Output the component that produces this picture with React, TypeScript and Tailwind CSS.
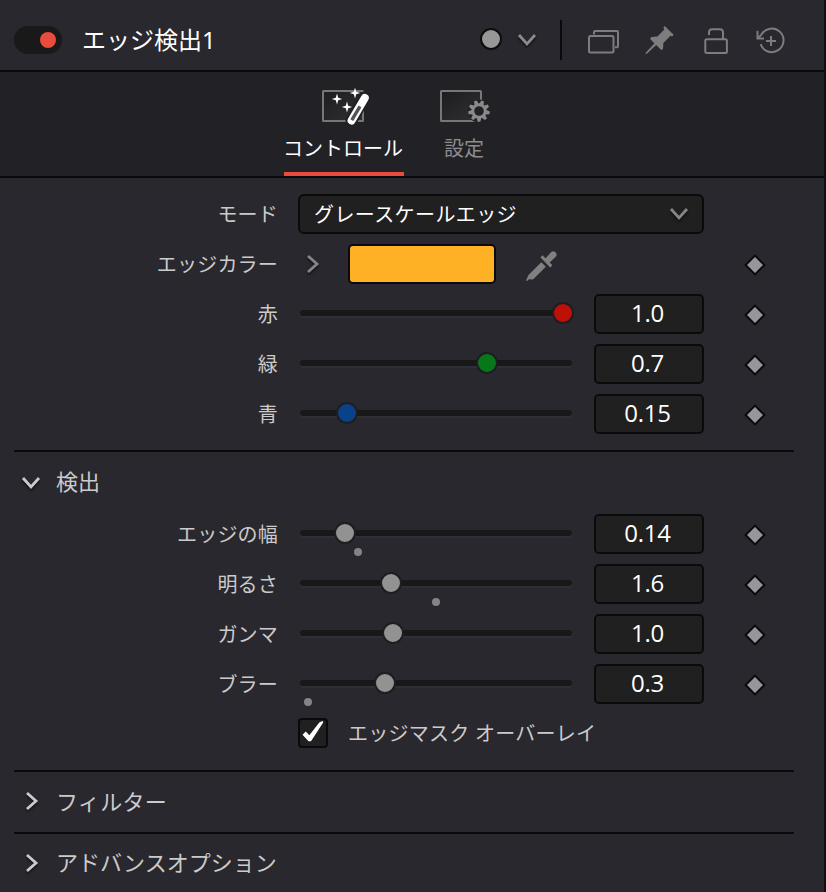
import { useState } from 'react';

type SliderRow = {
  label: string;
  value: string;
  thumb: number;
  mark?: number;
  color?: string;
};

const TRACK = 272;

const colorRows: SliderRow[] = [
  { label: '赤', value: '1.0', thumb: 263, color: 'bg-[#bd1108]' },
  { label: '緑', value: '0.7', thumb: 187, color: 'bg-[#08761b]' },
  { label: '青', value: '0.15', thumb: 47, color: 'bg-[#0a4289]' },
];

const detectRows: SliderRow[] = [
  { label: 'エッジの幅', value: '0.14', thumb: 45, mark: 58 },
  { label: '明るさ', value: '1.6', thumb: 91, mark: 136 },
  { label: 'ガンマ', value: '1.0', thumb: 93 },
  { label: 'ブラー', value: '0.3', thumb: 85, mark: 8 },
];

const Chevron = ({ dir, className }: { dir: 'down' | 'right'; className: string }) => (
  <svg
    width="24"
    height="24"
    viewBox="0 0 24 24"
    fill="none"
    stroke="currentColor"
    strokeWidth="2.8"
    className={`shrink-0 drop-shadow-[0_2px_1px_rgba(0,0,0,0.55)] ${className}`}
  >
    {dir === 'down' ? <path d="M4 7 12 16 20 7" /> : <path d="M8 4 17 12 8 20" />}
  </svg>
);

const Diamond = () => (
  <svg width="22" height="22" viewBox="0 0 22 22" className="mt-0.5 ml-[40px] shrink-0">
    <path d="M11 1.6 20.4 11 11 20.4 1.6 11Z" fill="#97969c" stroke="#0a0a0a" strokeWidth="2" />
  </svg>
);

const Label = ({ children }: { children?: string }) => (
  <div className="w-[278px] shrink-0 pt-0.5 text-right text-xl tracking-[0.2px] text-[#cbcbcb]">{children}</div>
);

const Slider = ({ row }: { row: SliderRow }) => (
  <div className="relative ml-[22px] h-[50px] w-[272px] shrink-0">
    <div className="mt-[21px] h-1.5 rounded-full bg-[#181818] shadow-[0_2px_0_#302f36]" />
    <div
      className={`absolute top-[13px] size-[22px] -translate-x-1/2 rounded-full border-2 border-[#1e1e20] ${row.color ?? 'bg-[#929292]'}`}
      style={{ left: `${(row.thumb / TRACK) * 100}%` }}
    />
    {row.mark !== undefined && (
      <div
        className="absolute top-[39px] size-2 -translate-x-1/2 rounded-full bg-[#848484]"
        style={{ left: `${(row.mark / TRACK) * 100}%` }}
      />
    )}
  </div>
);

const ParamRow = ({ row }: { row: SliderRow }) => (
  <div className="flex h-[50px] items-center">
    <Label>{row.label}</Label>
    <Slider row={row} />
    <div className="ml-[22px] flex h-10 w-[110px] shrink-0 items-center justify-center rounded-[5px] border-2 border-[#0a0a0a] bg-[#202020] pr-[3px] pb-0.5 font-['Open_Sans',sans-serif] text-2xl leading-none tracking-[-0.2px] text-white">
      {row.value}
    </div>
    <Diamond />
  </div>
);

const Divider = () => <div className="mr-[30px] ml-3.5 h-0.5 bg-[#0a0a0c]" />;

const Header = () => {
  const [enabled, setEnabled] = useState(true);

  return (
    <div className="flex h-[72px] shrink-0 items-center border-b-2 border-[#0a0a0c] pt-[10px] pl-3.5">
      <button
        onClick={() => setEnabled(!enabled)}
        className={`flex h-7 w-12 items-center rounded-full bg-[#191919] px-1.5 ${enabled ? 'justify-end' : 'justify-start'}`}
      >
        <span className="size-4 rounded-full bg-[#e94b3c]" />
      </button>
      <div className="ml-5 w-[398px] text-2xl leading-none text-white">エッジ検出1</div>
      <div className="-mt-0.5 size-[22px] rounded-full border-2 border-[#0c0c0c] bg-[#979797]" />
      <Chevron dir="down" className="ml-[13px] text-[#8b8b8b]" />
      <div className="ml-[21px] h-10 w-0.5 bg-[#0a0a0c]" />
      <div className="mt-0.5 ml-[22px] flex items-center gap-6 text-[#7d7d7d]">
        {/* Versions */}
        <svg width="36" height="32" viewBox="584 25 36 32" fill="none" stroke="currentColor" strokeWidth="2">
          <rect x="589" y="36" width="24.5" height="16.5" rx="1.5" />
          <path d="M594 34.5V32Q594 31 595 31H617Q618 31 618 32V46Q618 47.2 617 47.2H615" />
        </svg>
        {/* Pin */}
        <svg width="32" height="32" viewBox="644 25 32 32" fill="currentColor">
          <path d="M664.8 26 673.6 34.8 672.2 36.4 670.5 35.8 663.4 43 663 49 661.2 50 656.2 45 646.6 54 645.4 53 654.4 43.6 650 38.8 651.5 37 657.5 36.4 664.3 29.4 663.4 27.4Z" />
        </svg>
        {/* Lock */}
        <svg width="32" height="32" viewBox="700 25 32 32" fill="none" stroke="currentColor" strokeWidth="2">
          <rect x="705.3" y="39.3" width="21.6" height="13.6" rx="1.5" />
          <path d="M709 35V32.2Q709 29.3 712 29.3H720Q723 29.3 723 32.2V39" />
        </svg>
        {/* Reset */}
        <svg width="32" height="32" viewBox="756 25 32 32" fill="none" stroke="currentColor" strokeWidth="2">
          <path d="M760.6 44.2A11.8 11.8 0 1 0 761.4 34.6L757.8 38.2" />
          <path d="M757.5 30.8V38.5H764" />
          <path d="M771 36V46M766 41H776" />
        </svg>
      </div>
    </div>
  );
};

const WandIcon = () => (
  <svg width="56" height="44" viewBox="316 84 56 44">
    <defs>
      <linearGradient id="screen" x1="0" y1="0" x2="1" y2="1">
        <stop offset="0" stopColor="#1d1d20" />
        <stop offset="1" stopColor="#303034" />
      </linearGradient>
    </defs>
    <rect x="323" y="91" width="40" height="30" rx="0.5" fill="url(#screen)" stroke="#777" strokeWidth="2" />
    <path d="M364.5 97.5 351.5 120.5" stroke="#222126" strokeWidth="12" strokeLinecap="round" />
    <path d="M364.8 98 351.6 120.6" stroke="#fff" strokeWidth="8" strokeLinecap="round" />
    <path d="M360 106.4 351.8 120.2" stroke="#555" strokeWidth="3.4" />
    <g fill="#fff">
      <path d="M337 93.5 338.2 97.8 342.2 99 338.2 100.200 337 104.500 335.800 100.200 331.800 99 335.800 97.800Z" />
      <path d="M355 87.500 356.200 91.800 360.200 93 356.200 94.200 355 98.500 353.800 94.200 349.800 93 353.800 91.800Z" />
      <path d="M347 101.500 348.200 105.800 352.200 107 348.200 108.200 347 112.500 345.800 108.200 341.800 107 345.800 105.800Z" />
    </g>
  </svg>
);

const GearIcon = () => (
  <svg width="56" height="44" viewBox="436 84 56 44">
    <rect x="441" y="91" width="40" height="30" rx="0.5" fill="url(#screen)" stroke="#777" strokeWidth="2" />
    <circle cx="479" cy="111" r="11.5" fill="#222126" />
    <circle cx="479" cy="111" r="6.2" fill="none" stroke="#8a8a8a" strokeWidth="2.8" />
    <g fill="#8a8a8a">
      {[20, 60, 100, 140, 180, 220, 260, 300, 340].map((a) => (
        <path key={a} d="M476.600 104.500 477.700 100.200H480.300L481.400 104.500Z" transform={`rotate(${a} 479 111)`} />
      ))}
    </g>
  </svg>
);

const Tabs = () => {
  const [tab, setTab] = useState('controls');

  return (
    <div className="flex h-[106px] shrink-0 border-b-2 border-[#0a0a0c] bg-[#222126] pl-[284px] text-xl">
      <button
        onClick={() => setTab('controls')}
        className={`flex w-[120px] flex-col items-center border-b-4 pt-3 ${tab === 'controls' ? 'border-[#e94b3c] text-white' : 'border-transparent text-[#8d8d8d]'}`}
      >
        <WandIcon />
        <span className="mt-1.5 mr-0.5 leading-[30px] whitespace-nowrap">コントロール</span>
      </button>
      <button
        onClick={() => setTab('settings')}
        className={`flex w-[120px] flex-col items-center border-b-4 pt-3 ${tab === 'settings' ? 'border-[#e94b3c] text-white' : 'border-transparent text-[#8d8d8d]'}`}
      >
        <GearIcon />
        <span className="mt-1.5 leading-[30px]">設定</span>
      </button>
    </div>
  );
};

export default function App() {
  const [overlay, setOverlay] = useState(true);

  return (
    <div className="flex h-[892px] w-[826px] flex-col overflow-hidden border-r-2 border-[#101012] bg-[#29282e] font-['Noto_Sans','Noto_Sans_CJK_JP',sans-serif]">
      <Header />
      <Tabs />

      <div className="pt-[11px] pb-[11px]">
        <div className="flex h-[50px] items-center">
          <Label>モード</Label>
          <div className="ml-5 flex h-10 w-[406px] items-center justify-between rounded-md border-2 border-[#0a0a0a] bg-[#202020] pr-[11px] pl-3.5 text-xl tracking-[0.4px] text-white">
            <span className="pt-0.5">グレースケールエッジ</span>
            <Chevron dir="down" className="text-[#858585]" />
          </div>
        </div>
        <div className="flex h-[50px] items-center">
          <Label>エッジカラー</Label>
          <Chevron dir="right" className="ml-[22px] text-[#858585]" />
          <div className="ml-6 h-10 w-[148px] rounded-[5px] border-2 border-[#0a0a0a] bg-[#ffb126]" />
          <svg width="34" height="34" viewBox="524 248 34 34" fill="#808080" className="mt-0.5 ml-7 mr-[146px] shrink-0">
            <path d="M526 280.500 528.500 275 541.300 262.200 545.800 266.700 533 279.500 529 279.300 527 281Z" />
            <path d="M540.500 257.500 542.500 255.300 545.500 258.300 551.500 251.800Q553.500 250.300 555.500 252.300T556 256.500L549.700 262.500 552.400 265.200 550.200 267.400Z" />
          </svg>
          <Diamond />
        </div>
        {colorRows.map((row) => (
          <ParamRow key={row.label} row={row} />
        ))}
      </div>

      <Divider />
      <div className="flex h-[57px] items-center pt-0.5 pl-[19px] text-[22px] text-[#cbcbcb]">
        <Chevron dir="down" className="mt-0.5 mr-[13px]" />
        検出
      </div>
      {detectRows.map((row) => (
        <ParamRow key={row.label} row={row} />
      ))}
      <div className="flex h-[61px] items-start pt-[9px]">
        <button
          onClick={() => setOverlay(!overlay)}
          className="ml-[298px] flex size-[30px] items-center justify-center rounded-[4px] border-2 border-[#0a0a0a] bg-[#202020]"
        >
          {overlay && (
            <svg width="26" height="26" viewBox="300 720 26 26" fill="#fff" className="shrink-0">
              <path d="M302.500 734.700 305.800 731.500 309.300 735.200 319.500 722.300 322.800 721 323.200 722.500 311 741.300H308.500Z" />
            </svg>
          )}
        </button>
        <span className="ml-5 pt-px text-xl leading-[30px] tracking-[0.25px] text-[#cbcbcb]">エッジマスク オーバーレイ</span>
      </div>

      <Divider />
      <div className="flex h-[60px] items-center pb-0.5 pl-[19px] text-[22px] tracking-[0.3px] text-[#cbcbcb]">
        <Chevron dir="right" className="mr-[13px]" />
        フィルター
      </div>
      <Divider />
      <div className="flex h-[58px] items-center pl-[19px] text-[22px] text-[#cbcbcb]">
        <Chevron dir="right" className="mr-[13px]" />
        <span className="-mt-0.5">アドバンスオプション</span>
      </div>
    </div>
  );
}
